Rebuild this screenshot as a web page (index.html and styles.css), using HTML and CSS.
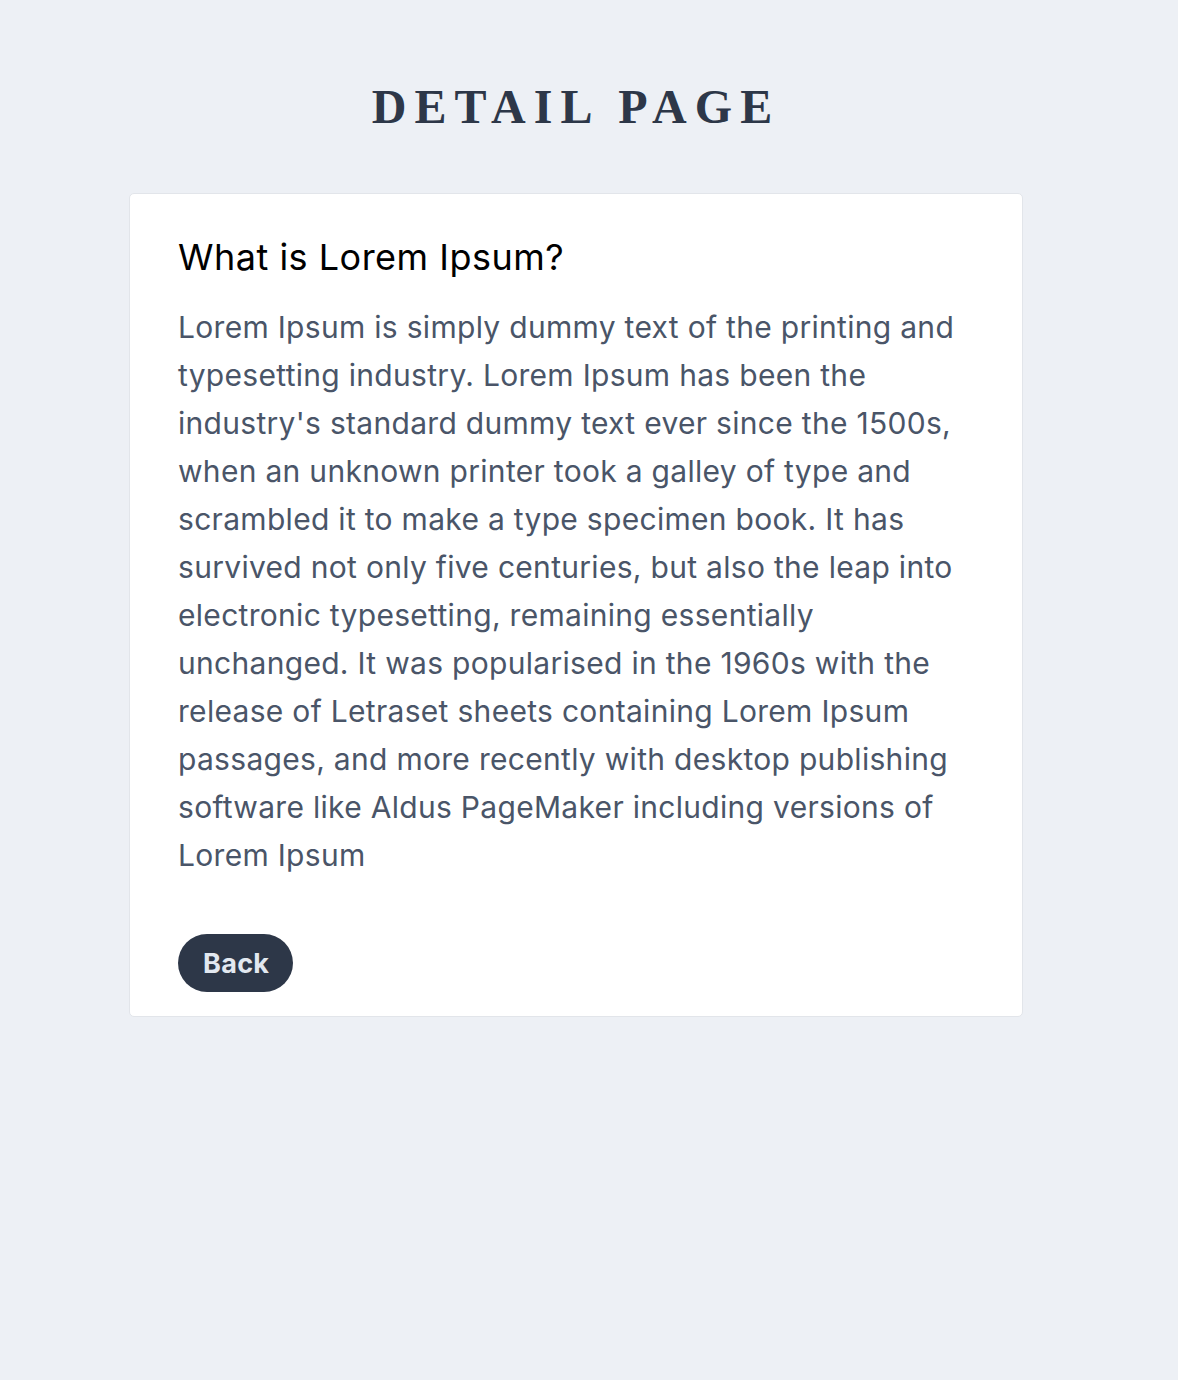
FILE: index.html
```html
<!DOCTYPE html>
<html lang="en">
<head>
<meta charset="utf-8">
<title>Detail Page</title>
<link rel="stylesheet" href="styles.css">
</head>
<body>
<main class="page">
  <h1 class="page-title">DETAIL PAGE</h1>
  <article class="card">
    <h2 class="card-title">What is Lorem Ipsum?</h2>
    <p class="card-text">Lorem Ipsum is simply dummy text of the printing and typesetting industry. Lorem Ipsum has been the industry's standard dummy text ever since the 1500s, when an unknown printer took a galley of type and scrambled it to make a type specimen book. It has survived not only five centuries, but also the leap into electronic typesetting, remaining essentially unchanged. It was popularised in the 1960s with the release of Letraset sheets containing Lorem Ipsum passages, and more recently with desktop publishing software like Aldus PageMaker including versions of Lorem Ipsum</p>
    <button class="back-btn" type="button">Back</button>
  </article>
</main>
</body>
</html>
```
FILE: styles.css
```css
* { box-sizing: border-box; }
html, body { margin: 0; padding: 0; }
body {
  background: #edf0f5;
  font-family: Inter, "Noto Sans", sans-serif;
  min-height: 1380px;
}
.page {
  width: 1152px;
  display: flex;
  flex-direction: column;
  align-items: center;
  padding-top: 79px;
}
.page-title {
  margin: 0 0 58px;
  font-family: "Liberation Serif", "DejaVu Serif", serif;
  font-weight: 700;
  font-size: 48px;
  line-height: 56px;
  letter-spacing: 8.1px;
  color: #2d3748;
}
.card {
  width: 894px;
  background: #fff;
  border: 1px solid #e2e5ea;
  border-radius: 5px;
  padding: 43px 48px 24px;
}
.card-title {
  margin: 0 0 26px;
  font-size: 36px;
  line-height: 40px;
  font-weight: 400;
  letter-spacing: 0.5px;
  color: #000;
}
.card-text {
  margin: 0 0 55px;
  font-size: 30px;
  line-height: 48px;
  letter-spacing: 0.3px;
  color: #4a5568;
}
.back-btn {
  display: block;
  height: 58px;
  padding: 0 24px 0 25px;
  border: 0;
  border-radius: 29px;
  background: #2d3748;
  color: #e2e8f0;
  font-family: Inter, "Noto Sans", sans-serif;
  font-weight: 700;
  font-size: 27px;
  letter-spacing: 0.3px;
  cursor: pointer;
}
```
